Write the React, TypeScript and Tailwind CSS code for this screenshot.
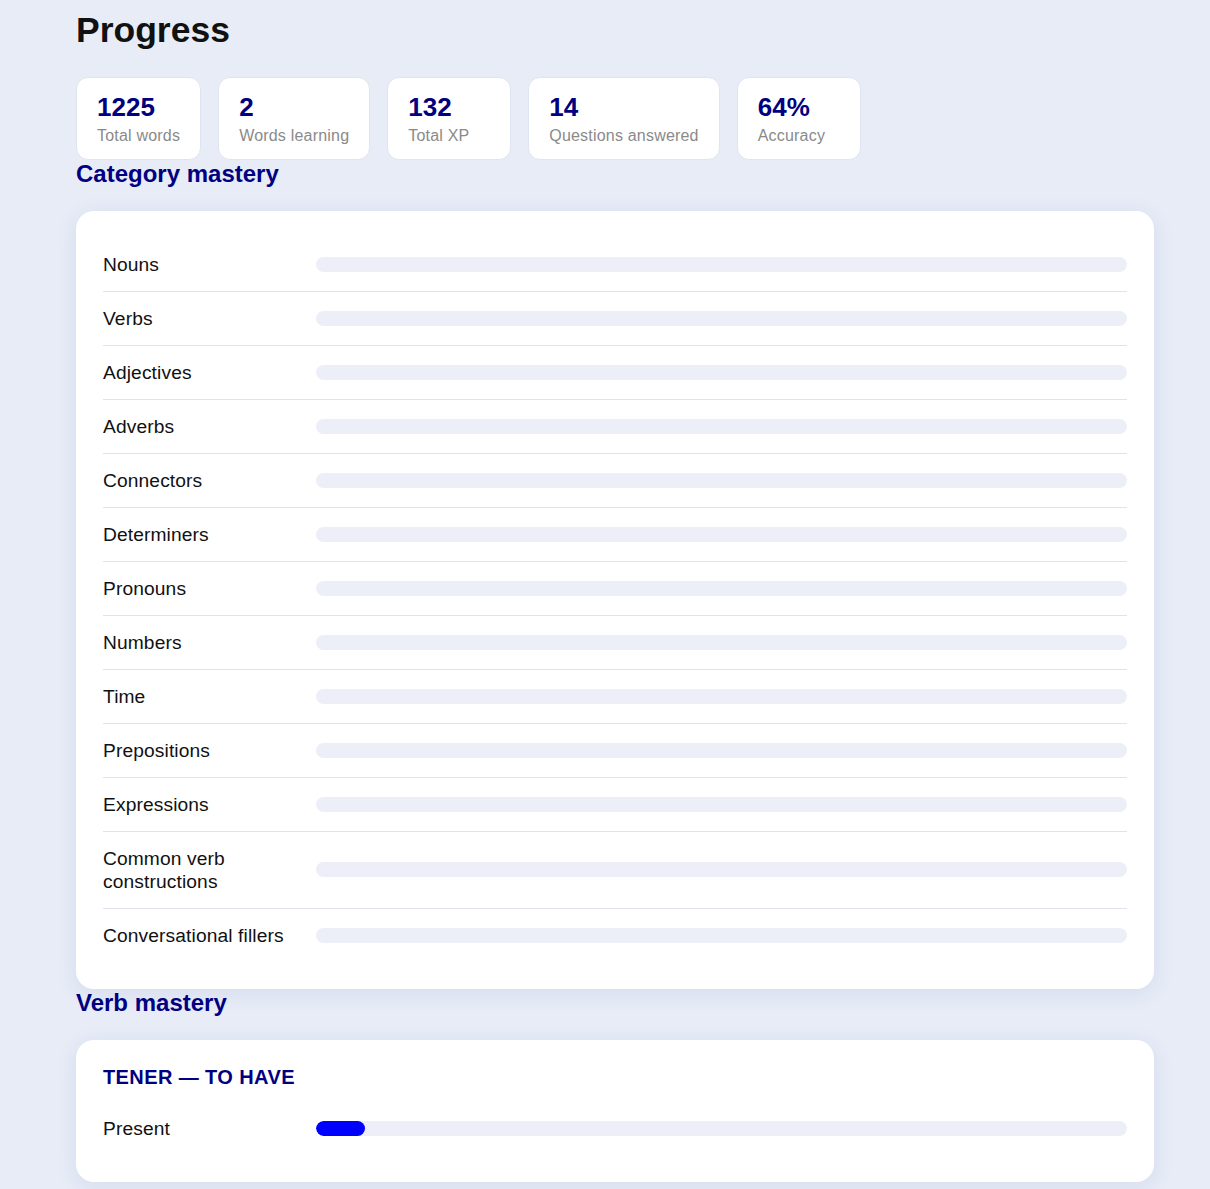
const STATS = [
  { value: '1225', label: 'Total words' },
  { value: '2', label: 'Words learning' },
  { value: '132', label: 'Total XP' },
  { value: '14', label: 'Questions answered' },
  { value: '64%', label: 'Accuracy' },
];

const CATEGORIES = [
  'Nouns',
  'Verbs',
  'Adjectives',
  'Adverbs',
  'Connectors',
  'Determiners',
  'Pronouns',
  'Numbers',
  'Time',
  'Prepositions',
  'Expressions',
  'Common verb constructions',
  'Conversational fillers',
];

const VERBS = [
  {
    title: 'Tener — to have',
    tenses: [{ name: 'Present', pct: 6 }],
  },
];

function MasteryRow({ label, pct }: { label: string; pct: number }) {
  return (
    <div className="grid grid-cols-[200px_1fr] items-center gap-[13px] border-b border-[#e2e2ee] py-[15px] last:border-b-0">
      <span className="text-[19.2px] leading-[23px] tracking-[0.12px] text-[#111]">{label}</span>
      <div className="h-[15px] overflow-hidden rounded-full bg-[#eceff7]">
        {pct > 0 && (
          <div className="h-full rounded-full bg-[#0000ff]" style={{ width: `${pct}%` }} />
        )}
      </div>
    </div>
  );
}

export default function App() {
  return (
    <div className="min-h-screen bg-[#e7ecf7] font-['Liberation_Sans',Arial,sans-serif] text-[#111]">
      <div className="ml-[76px] w-[1078px] pt-[9px] pb-10">
        <h1 className="text-[35.5px] font-bold leading-[43px] text-[#111]">Progress</h1>

        {/* Stat cards */}
        <div className="mt-[25px] flex gap-[17px]">
          {STATS.map((s) => (
            <div
              key={s.label}
              className="min-w-[124px] rounded-xl border border-[#dfe4f2] bg-white px-5 pt-[14px] pb-[13px]"
            >
              <div className="text-[26px] font-bold leading-[30px] text-[#000080]">{s.value}</div>
              <div className="mt-1 text-base leading-[20px] tracking-[0.2px] text-[#8a8a8a]">{s.label}</div>
            </div>
          ))}
        </div>

        <h2 className="text-2xl font-bold leading-[1.2] text-[#000080]">Category mastery</h2>
        <section className="mt-[22px] rounded-[18px] bg-white p-[27px] shadow-[0_4px_22px_rgba(40,50,130,0.09)]">
          {CATEGORIES.map((c) => (
            <MasteryRow key={c} label={c} pct={0} />
          ))}
        </section>

        <h2 className="text-2xl font-bold leading-[1.2] text-[#000080]">Verb mastery</h2>
        {VERBS.map((v) => (
          <section
            key={v.title}
            className="mt-[22px] rounded-[18px] bg-white p-[27px] shadow-[0_4px_22px_rgba(40,50,130,0.09)]"
          >
            <h3 className="mb-[15px] text-[20px] font-bold uppercase leading-none tracking-[0.4px] text-[#000080]">
              {v.title}
            </h3>
            {v.tenses.map((t) => (
              <MasteryRow key={t.name} label={t.name} pct={t.pct} />
            ))}
          </section>
        ))}
      </div>
    </div>
  );
}
